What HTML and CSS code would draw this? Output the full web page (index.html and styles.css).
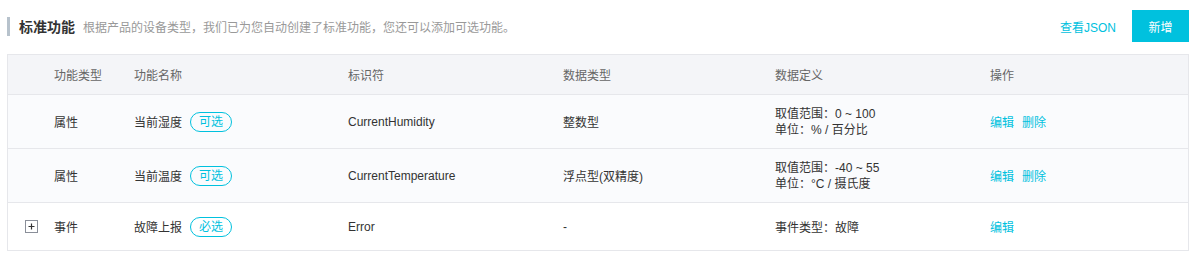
FILE: index.html
```html
<!DOCTYPE html>
<html lang="zh-CN">
<head>
<meta charset="utf-8">
<title>标准功能</title>
<link rel="stylesheet" href="styles.css">
</head>
<body>
<div class="page">
  <div class="toolbar">
    <div class="title-wrap">
      <span class="title-bar"></span>
      <span class="title">标准功能</span>
      <span class="desc">根据产品的设备类型，我们已为您自动创建了标准功能，您还可以添加可选功能。</span>
    </div>
    <div class="actions">
      <a class="link json-link">查看JSON</a>
      <button class="btn-primary">新增</button>
    </div>
  </div>

  <div class="table">
    <div class="tr thead">
      <div class="c c0"></div>
      <div class="c c1">功能类型</div>
      <div class="c c2">功能名称</div>
      <div class="c c3">标识符</div>
      <div class="c c4">数据类型</div>
      <div class="c c5">数据定义</div>
      <div class="c c6">操作</div>
    </div>
    <div class="tr row tinted">
      <div class="c c0"></div>
      <div class="c c1">属性</div>
      <div class="c c2">当前湿度<span class="tag">可选</span></div>
      <div class="c c3">CurrentHumidity</div>
      <div class="c c4">整数型</div>
      <div class="c c5 def"><div>取值范围：0 ~ 100</div><div>单位：% / 百分比</div></div>
      <div class="c c6"><a class="link">编辑</a><a class="link op">删除</a></div>
    </div>
    <div class="tr row tinted">
      <div class="c c0"></div>
      <div class="c c1">属性</div>
      <div class="c c2">当前温度<span class="tag">可选</span></div>
      <div class="c c3">CurrentTemperature</div>
      <div class="c c4">浮点型(双精度)</div>
      <div class="c c5 def"><div>取值范围：-40 ~ 55</div><div>单位：°C / 摄氏度</div></div>
      <div class="c c6"><a class="link">编辑</a><a class="link op">删除</a></div>
    </div>
    <div class="tr row short">
      <div class="c c0">
        <svg class="expand" width="13" height="13" viewBox="0 0 13 13">
          <rect x="0.5" y="0.5" width="12" height="12" fill="#fff" stroke="#8a8f99"/>
          <path d="M3.5 6.5h6M6.5 3.5v6" stroke="#333" stroke-width="1.2"/>
        </svg>
      </div>
      <div class="c c1">事件</div>
      <div class="c c2">故障上报<span class="tag">必选</span></div>
      <div class="c c3">Error</div>
      <div class="c c4">-</div>
      <div class="c c5">事件类型：故障</div>
      <div class="c c6"><a class="link">编辑</a></div>
    </div>
  </div>
</div>
</body>
</html>
```

FILE: styles.css
```css
* { box-sizing: border-box; }

html, body {
  margin: 0;
  padding: 0;
  background: #fff;
}

body {
  font-family: "Liberation Sans", "Noto Sans CJK SC", sans-serif;
  font-size: 12px;
  color: #333;
}

.page {
  padding: 10px 8px 0 7px;
}

.toolbar {
  display: flex;
  align-items: center;
  justify-content: space-between;
  height: 32px;
  margin-bottom: 12px;
}

.title-wrap {
  display: flex;
  align-items: center;
}

.title-bar {
  display: block;
  width: 3px;
  height: 19px;
  background: #b7c2cc;
  margin-right: 9px;
}

.title {
  font-size: 14px;
  font-weight: bold;
  color: #333;
  margin-right: 8px;
}

.desc {
  font-size: 12px;
  color: #999;
}

.actions {
  display: flex;
  align-items: center;
}

.link {
  color: #00c1de;
  cursor: pointer;
  text-decoration: none;
}

.json-link {
  margin-right: 16px;
}

.btn-primary {
  height: 32px;
  width: 57px;
  padding: 0;
  border: none;
  background: #00c1de;
  color: #fff;
  font-family: inherit;
  font-size: 12px;
}

.table {
  border: 1px solid #e6e7eb;
  width: 1182px;
}

.tr {
  display: flex;
  align-items: center;
}

.tr + .tr {
  border-top: 1px solid #e6e7eb;
}

.thead {
  height: 39px;
  background: #f4f5f8;
  color: #666;
}

.row {
  height: 54px;
}

.row.short {
  height: 48px;
}

.tinted {
  background: #fafbfd;
}

.c {
  display: flex;
  align-items: center;
  flex: none;
}

.c0 { width: 46px; padding-left: 17px; }
.c1 { width: 80px; }
.c2 { width: 214px; }
.c3 { width: 215px; }
.c4 { width: 212px; }
.c5 { width: 215px; }
.c6 { width: 198px; }

.def {
  flex-direction: column;
  align-items: flex-start;
  line-height: 16px;
}

.tag {
  display: inline-block;
  height: 20px;
  line-height: 18px;
  padding: 0 8px;
  margin-left: 8px;
  border: 1px solid #00c1de;
  border-radius: 10px;
  color: #00c1de;
}

.op {
  margin-left: 8px;
}

.expand {
  display: block;
}
```
